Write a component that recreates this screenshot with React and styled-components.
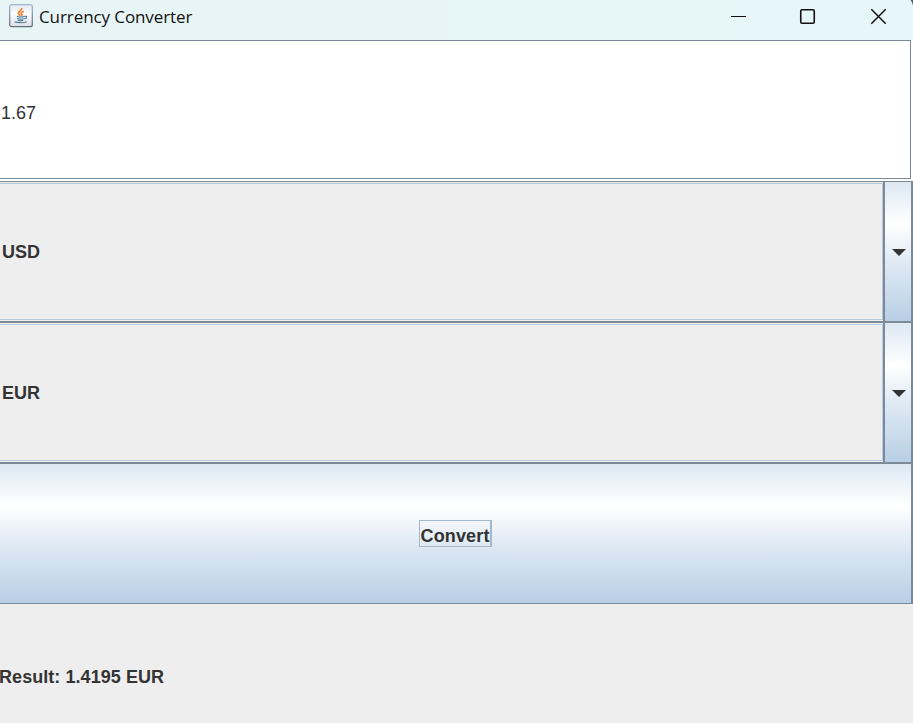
import React from 'react';
import styled, { createGlobalStyle } from 'styled-components';

const steel = '#7a8a99';
const sky = '#b8cfe5';
const metal = 'linear-gradient(#dde8f3 0%, #ffffff 30%, #dde8f3 60%, #b8cfe5 100%)';

const GlobalStyle = createGlobalStyle`
  * { box-sizing: border-box; }
  body { margin: 0; overflow: hidden; background: #eeeeee; }
`;

const Window = styled.main`
  width: 913px;
  height: 723px;
  display: flex;
  flex-direction: column;
  overflow: hidden;
  background: #eeeeee;
  color: #333333;
  font: bold 18px/21px "Liberation Sans", Arial, sans-serif;
`;

const TitleBar = styled.header`
  height: 40px;
  flex: none;
  display: flex;
  align-items: flex-start;
  background: linear-gradient(90deg, #e8f5f6, #e6f6fa);
`;

const AppIcon = styled.svg`
  margin: 4px 0 0 9px;
  flex: none;
`;

const Title = styled.h1`
  margin: 5px auto 0 6px;
  color: #111111;
  font: 400 17px/24px "Open Sans", "Noto Sans", sans-serif;
  letter-spacing: -0.09px;
  white-space: nowrap;
`;

const WindowControls = styled.svg`
  flex: none;
`;

const FieldArea = styled.div`
  flex: none;
  height: 141px;
  background: #ffffff;
`;

const AmountField = styled.input`
  display: block;
  width: 911px;
  height: 139px;
  margin: 0;
  padding: 7px 0 0 1px;
  border: 1px solid ${steel};
  border-left: 0;
  border-radius: 0;
  outline: 0;
  background: #ffffff;
  color: #333333;
  font: 400 18px/21px "Liberation Sans", Arial, sans-serif;
`;

const ComboBox = styled.div`
  height: 141px;
  flex: none;
  display: flex;
  border-top: 1px solid ${steel};
  border-bottom: 1px solid ${steel};
  border-right: 2px solid ${steel};
`;

const ComboValue = styled.div`
  width: 883px;
  margin: 1px 0;
  padding: 2px 0 0 2px;
  display: flex;
  align-items: center;
  border: 1px solid ${(p) => (p.$soft ? '#b8c9da' : sky)};
  border-left: 0;
  background: #eeeeee;
`;

const ComboArrow = styled.button`
  width: 28px;
  padding: 1px 0 0 1px;
  display: flex;
  align-items: center;
  justify-content: center;
  border: 0;
  border-left: 2px solid ${steel};
  background: ${metal};
`;

const ConvertButton = styled.button`
  height: 141px;
  flex: none;
  padding: 0 1px 0 0;
  display: flex;
  align-items: center;
  justify-content: center;
  border: solid ${steel};
  border-width: 1px 2px 1px 0;
  background: ${metal};
  color: #333333;
  font: bold 18px/21px "Liberation Sans", Arial, sans-serif;
`;

const FocusLabel = styled.span`
  width: 73px;
  height: 27px;
  padding: 5px 0 0 1px;
  border: 1px solid #a3b8cc;
  border-right-width: 2px;
  text-align: left;
  letter-spacing: 0.15px;
`;

const Result = styled.output`
  flex: 1;
  padding-top: 63px;
  margin-left: -1px;
  letter-spacing: 0.06px;
`;

function JavaIcon() {
  return (
    <AppIcon width="24" height="24" viewBox="0 0 24 24" fill="none">
      <defs>
        <linearGradient id="tile" x1="0" y1="0" x2="0" y2="1">
          <stop stopColor="#e2e8ee" />
          <stop offset=".4" stopColor="#fdfdfd" />
          <stop offset="1" stopColor="#dce1e8" />
        </linearGradient>
        <linearGradient id="rim" x1="0" y1="0" x2="0" y2="1">
          <stop stopColor="#a2bacd" />
          <stop offset="1" stopColor="#666e7a" />
        </linearGradient>
      </defs>
      <rect x=".7" y=".7" width="22.6" height="22" rx="2" fill="url(#tile)" stroke="url(#rim)" strokeWidth="1.3" />
      <path d="M12.7 4c.8 2.7-4.9 3.6-3 6.2l1.6 1.7M14.8 7.3c-3.4 1.2-3 2.2-1.9 3.3.5.7-.2 1.2-.6 1.5" stroke="#ef8534" strokeWidth="1.7" />
      <path d="M7.8 12.5c1.9.6 5.5.5 7.7 0M8 14.5c1.9.8 5 .7 6.9.2M8.7 16.3c1.6.7 3.7.6 5.5.1M15.6 12.4c3-.8 2.6 2-.4 2.6M5.6 17.8c2.2 1.2 9.5 1.2 12 0" stroke="#507d9e" strokeWidth="1.15" />
    </AppIcon>
  );
}

function Controls() {
  return (
    <WindowControls width="185" height="40" viewBox="0 0 185 40" fill="none" stroke="#111111">
      <path d="M3 16.5h15" strokeWidth="1" />
      <rect x="72.75" y="9.75" width="13.5" height="13.5" rx="1.3" strokeWidth="1.6" />
      <path d="M143.3 9.3l14.4 14.4M157.7 9.3l-14.4 14.4" strokeWidth="1.5" />
      <path d="M182.5 0H185v5.5Q184.5 2 182.5 0Z" fill="#4f5c63" stroke="none" />
    </WindowControls>
  );
}

function Combo({ value, soft }) {
  return (
    <ComboBox>
      <ComboValue $soft={soft}>{value}</ComboValue>
      <ComboArrow aria-label={`Choose currency, ${value}`}>
        <svg width="14" height="7" viewBox="0 0 14 7">
          <path d="M0 0h14L7 7Z" fill="#333333" />
        </svg>
      </ComboArrow>
    </ComboBox>
  );
}

export default function App() {
  return (
    <>
      <GlobalStyle />
      <Window>
        <TitleBar>
          <JavaIcon />
          <Title>Currency Converter</Title>
          <Controls />
        </TitleBar>
        <FieldArea>
          <AmountField aria-label="Amount" defaultValue="1.67" />
        </FieldArea>
        <Combo value="USD" soft />
        <Combo value="EUR" />
        <ConvertButton>
          <FocusLabel>Convert</FocusLabel>
        </ConvertButton>
        <Result>Result: 1.4195 EUR</Result>
      </Window>
    </>
  );
}
